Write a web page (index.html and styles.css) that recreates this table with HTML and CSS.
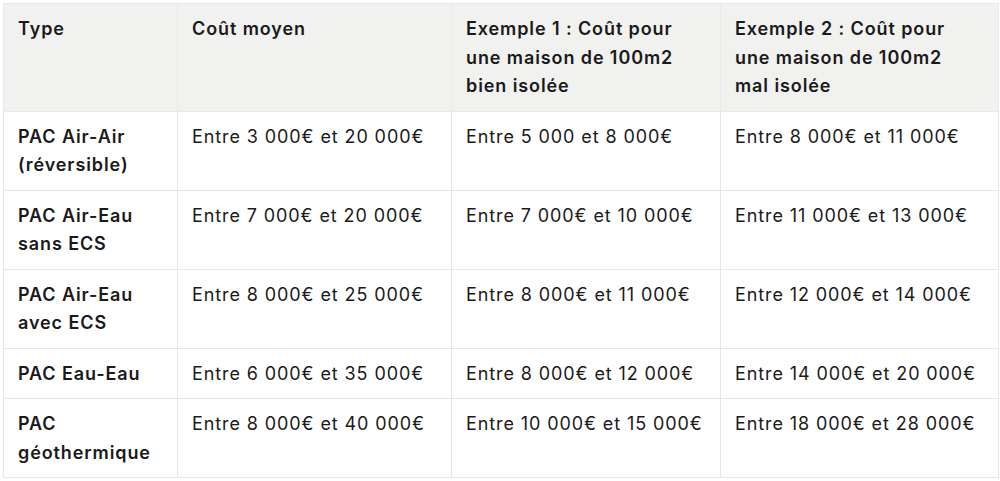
FILE: index.html
```html
<!DOCTYPE html>
<html lang="fr">
<head>
<meta charset="utf-8">
<title>Prix PAC</title>
<link rel="stylesheet" href="styles.css">
</head>
<body>
<div class="wrap">
<table class="costs">
<colgroup>
<col class="c1"><col class="c2"><col class="c3"><col class="c4">
</colgroup>
<thead>
<tr>
<th>Type</th>
<th>Coût moyen</th>
<th>Exemple 1 : Coût pour une maison de 100m2 bien isolée</th>
<th>Exemple 2 : Coût pour une maison de 100m2 mal isolée</th>
</tr>
</thead>
<tbody>
<tr><th>PAC Air-Air (réversible)</th><td>Entre 3 000€ et 20 000€</td><td>Entre 5 000 et 8 000€</td><td>Entre 8 000€ et 11 000€</td></tr>
<tr><th>PAC Air-Eau sans ECS</th><td>Entre 7 000€ et 20 000€</td><td>Entre 7 000€ et 10 000€</td><td>Entre 11 000€ et 13 000€</td></tr>
<tr><th>PAC Air-Eau avec ECS</th><td>Entre 8 000€ et 25 000€</td><td>Entre 8 000€ et 11 000€</td><td>Entre 12 000€ et 14 000€</td></tr>
<tr><th>PAC Eau-Eau</th><td>Entre 6 000€ et 35 000€</td><td>Entre 8 000€ et 12 000€</td><td>Entre 14 000€ et 20 000€</td></tr>
<tr><th>PAC géothermique</th><td>Entre 8 000€ et 40 000€</td><td>Entre 10 000€ et 15 000€</td><td>Entre 18 000€ et 28 000€</td></tr>
</tbody>
</table>
</div>
</body>
</html>
```
FILE: styles.css
```css
html, body {
  margin: 0;
  padding: 0;
  background: #ffffff;
}
.wrap {
  padding: 3px 0 0 3px;
}
.costs {
  border-collapse: collapse;
  table-layout: fixed;
  width: 995px;
  font-family: Inter, "Noto Sans", sans-serif;
  font-size: 18px;
  line-height: 28.5px;
  letter-spacing: 0.9px;
  color: #1a1a1a;
}
.c1 { width: 174px; }
.c2 { width: 274px; }
.c3 { width: 269px; }
.c4 { width: 278px; }
.costs th,
.costs td {
  border: 1px solid #e6e6e6;
  padding: 11px 14px 10px;
  text-align: left;
  vertical-align: top;
}
.costs th {
  font-weight: 600;
}
.costs td {
  font-weight: 400;
}
.costs thead th {
  background: #f1f1f0;
  border-color: #e9e9e8;
  padding-right: 20px;
}
.costs tbody th {
  background: #ffffff;
}
```
